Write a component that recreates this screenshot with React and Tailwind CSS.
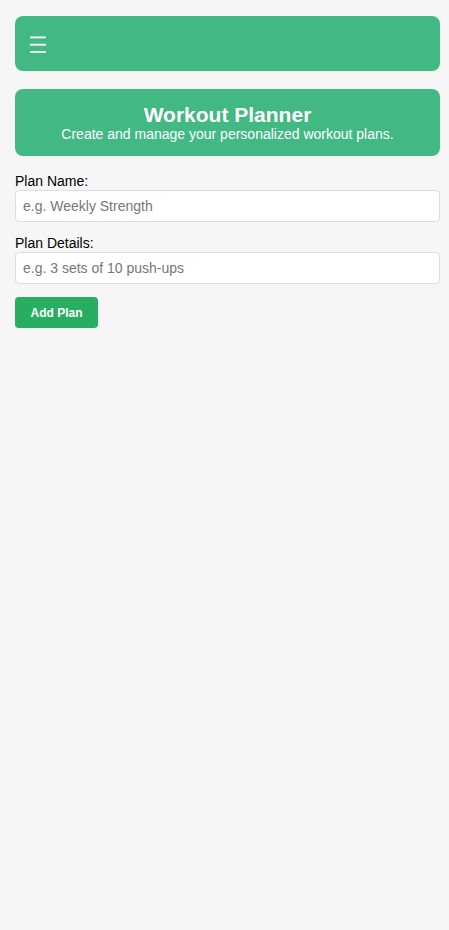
import React, { useState } from 'react'

const App = () => {
  const [planName, setPlanName] = useState('')
  const [planDetails, setPlanDetails] = useState('')

  return (
    <div className="min-h-screen bg-[#f6f6f6] pl-[15px] pr-[9px] pt-[16px] font-['Liberation_Sans',Arial,sans-serif] text-black">
      {/* Top bar */}
      <header className="h-[55px] rounded-[8px] bg-[#42b883] flex items-center px-[14px]">
        <button className="p-0" aria-label="Menu">
          <svg width="18" height="18" viewBox="0 0 18 18" className="block">
            <rect x="1" y="1.5" width="16" height="1.8" fill="#ffffff" />
            <rect x="1" y="8.8" width="16" height="1.8" fill="#ffffff" />
            <rect x="1" y="16" width="16" height="1.8" fill="#ffffff" />
          </svg>
        </button>
      </header>

      {/* Hero */}
      <section className="mt-[18px] rounded-[8px] bg-[#42b883] text-white text-center py-[14px]">
        <h1 className="text-[21px] leading-[23px] font-bold">Workout Planner</h1>
        <p className="text-[14px] leading-[16px]">Create and manage your personalized workout plans.</p>
      </section>

      {/* Form */}
      <form className="mt-[17px]" onSubmit={(e) => e.preventDefault()}>
        <label className="block text-[14px] leading-[17px]">Plan Name:</label>
        <input
          value={planName}
          onChange={(e) => setPlanName(e.target.value)}
          placeholder="e.g. Weekly Strength"
          className="block w-full h-[32px] bg-white border border-[#dddddd] rounded-[4px] px-[7px] text-[14px] placeholder:text-[#777777] outline-none"
        />
        <label className="block mt-[13px] text-[14px] leading-[17px]">Plan Details:</label>
        <input
          value={planDetails}
          onChange={(e) => setPlanDetails(e.target.value)}
          placeholder="e.g. 3 sets of 10 push-ups"
          className="block w-full h-[32px] bg-white border border-[#dddddd] rounded-[4px] px-[7px] text-[14px] placeholder:text-[#777777] outline-none"
        />
        <button
          type="submit"
          className="mt-[13px] h-[31px] w-[83px] rounded-[4px] bg-[#27ae60] text-white text-[12px] font-bold"
        >
          Add Plan
        </button>
      </form>
    </div>
  )
}

export default App
